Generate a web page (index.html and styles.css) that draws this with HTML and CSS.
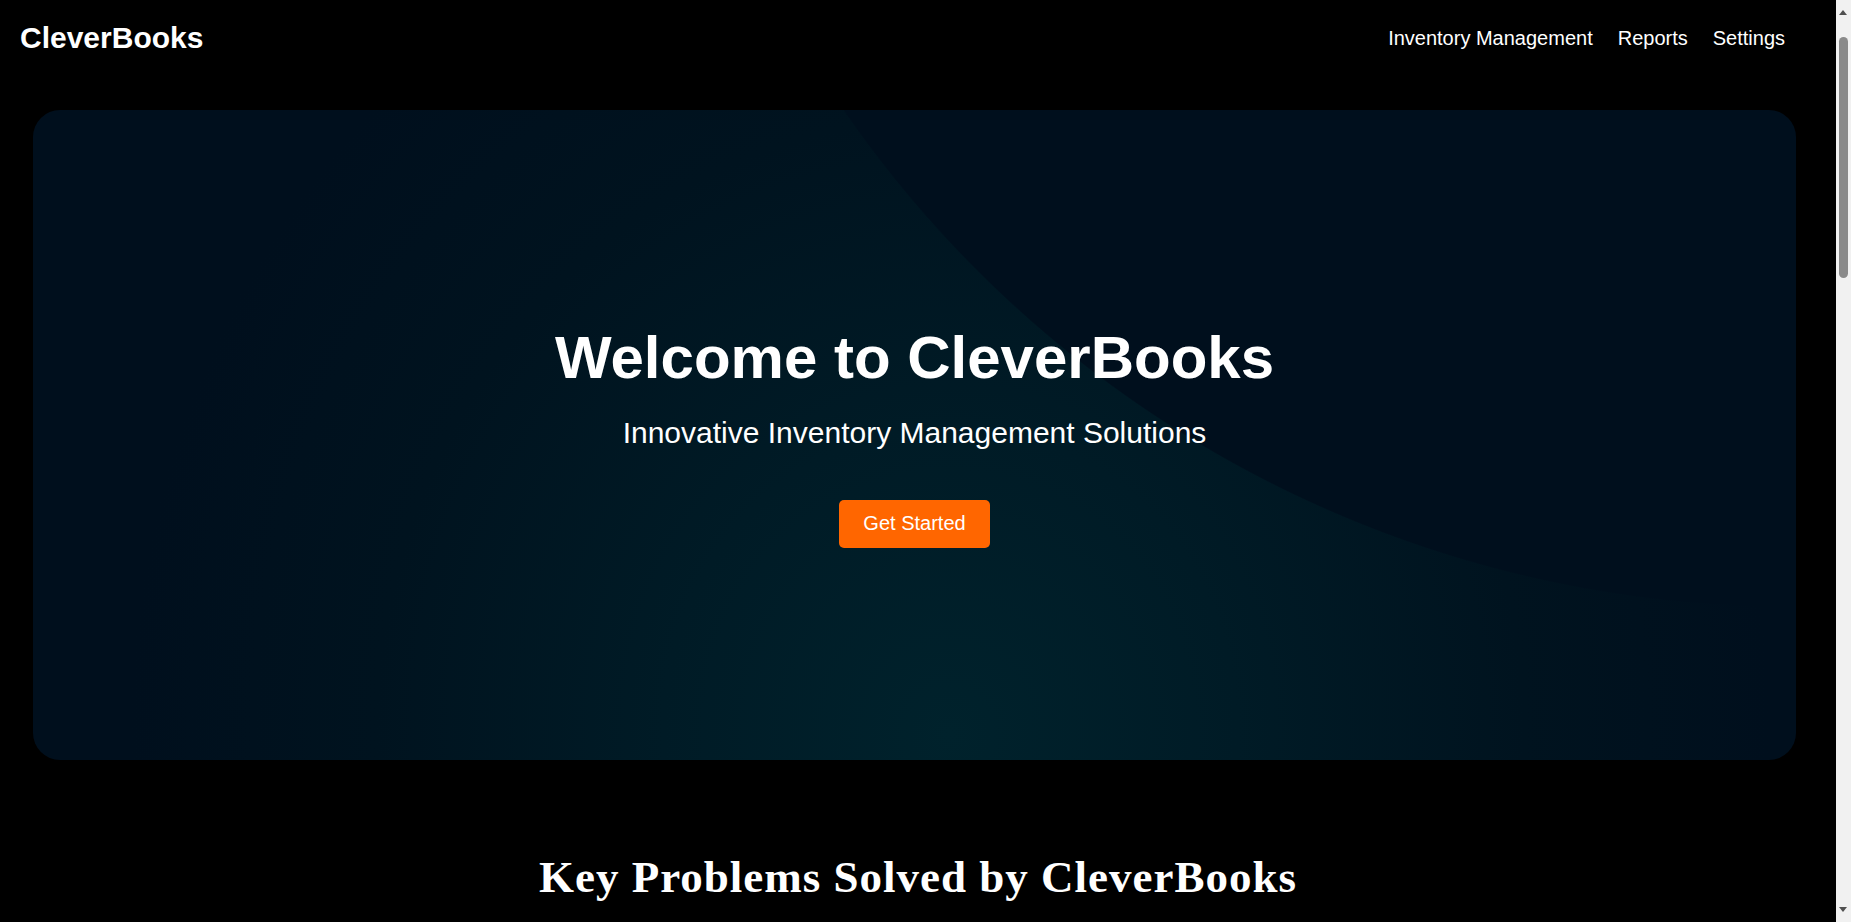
FILE: index.html
```html
<!DOCTYPE html>
<html lang="en">
<head>
<meta charset="utf-8">
<title>CleverBooks</title>
<link rel="stylesheet" href="styles.css">
</head>
<body>
<header class="nav">
  <div class="logo">CleverBooks</div>
  <nav class="links">
    <a href="#">Inventory Management</a>
    <a href="#">Reports</a>
    <a href="#">Settings</a>
  </nav>
</header>

<section class="hero">
  <h1 class="hero-title">Welcome to CleverBooks</h1>
  <p class="hero-sub">Innovative Inventory Management Solutions</p>
  <a class="btn" href="#">Get Started</a>
</section>

<section class="problems">
  <h2 class="section-title">Key Problems Solved by CleverBooks</h2>
</section>

<div class="scrollbar" aria-hidden="true">
  <span class="sb-up"></span>
  <span class="sb-thumb"></span>
  <span class="sb-down"></span>
</div>
</body>
</html>
```

FILE: styles.css
```css
html, body {
  margin: 0;
  padding: 0;
}

body {
  background: #000000;
  color: #ffffff;
  font-family: "Liberation Sans", Arial, sans-serif;
  margin-right: 15px;
}

.nav {
  display: flex;
  justify-content: space-between;
  align-items: center;
  padding: 21px 51px 21px 20px;
}

.logo {
  font-size: 30px;
  line-height: 34px;
  font-weight: bold;
}

.links {
  display: flex;
  gap: 25px;
}

.links a {
  color: #ffffff;
  text-decoration: none;
  font-size: 20px;
  line-height: 23px;
}

.hero {
  margin: 34px 40px 0 33px;
  height: 650px;
  border-radius: 27px;
  display: flex;
  flex-direction: column;
  align-items: center;
  justify-content: center;
  text-align: center;
  background:
    radial-gradient(circle 1149px at 1756px -652px, #000f1d 99.9%, rgba(0, 15, 29, 0) 100%),
    radial-gradient(ellipse 820px 880px at 52% 96%, #00222c 0%, #001b26 35%, #00131f 70%, #000f1d 100%);
}

.hero-title {
  margin: 0 0 24px;
  font-size: 60px;
  line-height: 69px;
  font-weight: bold;
}

.hero-sub {
  margin: 0 0 50px;
  font-size: 30px;
  line-height: 34px;
}

.btn {
  display: inline-block;
  background: #ff6600;
  color: #ffffff;
  text-decoration: none;
  font-size: 20px;
  line-height: 23px;
  padding: 12.5px 24.5px;
  border-radius: 5px;
}

.problems {
  padding: 91px 40px 20px;
  text-align: center;
}

.section-title {
  margin: 0;
  font-family: "Liberation Serif", "Times New Roman", serif;
  font-size: 45px;
  line-height: 52px;
  letter-spacing: 1px;
  font-weight: bold;
}

.scrollbar {
  position: fixed;
  top: 0;
  right: 0;
  width: 15px;
  height: 100vh;
  background: #f1f1f1;
}

.sb-up,
.sb-down {
  position: absolute;
  left: 3px;
  width: 0;
  height: 0;
  border-left: 4.5px solid transparent;
  border-right: 4.5px solid transparent;
}

.sb-up {
  top: 10px;
  border-bottom: 5px solid #505050;
}

.sb-down {
  bottom: 10px;
  border-top: 5px solid #505050;
}

.sb-thumb {
  position: absolute;
  top: 37px;
  left: 3px;
  width: 9px;
  height: 241px;
  border-radius: 5px;
  background: #8a8a8a;
}
```
